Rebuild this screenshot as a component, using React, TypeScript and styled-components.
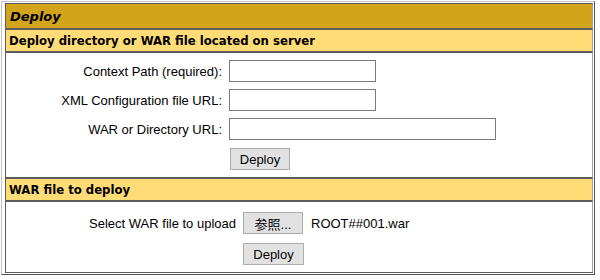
import React from "react";
import styled, { createGlobalStyle } from "styled-components";

const GlobalStyle = createGlobalStyle`
  body {
    margin: 0;
    background: #ffffff;
    font-family: "Liberation Sans", Arial, sans-serif;
  }
`;

const Frame = styled.div`
  margin: 1px 0 0 1px;
  width: 594px;
  box-sizing: border-box;
  border: 1px solid;
  border-color: #c4c4c4 #555555 #555555 #c4c4c4;
  padding: 1px 1px 1px 3px;
`;

const Cell = styled.div`
  border: 1px solid;
  border-color: #5c5c5c #a0a0a0 #5c5c5c #5c5c5c;
  box-sizing: border-box;
`;

const TitleCell = styled(Cell)`
  background: #d2a41c;
  height: 26px;
  display: flex;
  align-items: center;
  padding-left: 4px;
  font-family: "DejaVu Sans", Verdana, sans-serif;
  font-weight: bold;
  font-style: italic;
  font-size: 13px;
  color: #000;
`;

const HeaderCell = styled(Cell)`
  background: #ffdc75;
  height: 23px;
  display: flex;
  align-items: center;
  padding-left: 3px;
  font-family: "DejaVu Sans", Verdana, sans-serif;
  font-weight: bold;
  font-size: 11.7px;
  color: #000;
`;

const Body = styled(Cell)<{ $labelWidth: number; $pt: number; $pb: number; $gap: number }>`
  display: grid;
  grid-template-columns: ${(p) => p.$labelWidth}px 1fr;
  column-gap: 7px;
  row-gap: ${(p) => p.$gap}px;
  align-items: center;
  padding: ${(p) => p.$pt}px 0 ${(p) => p.$pb}px 0;
`;

const Label = styled.label`
  text-align: right;
  font-size: 13px;
  color: #000;
  white-space: nowrap;
`;

const TextInput = styled.input<{ $w: number }>`
  width: ${(p) => p.$w}px;
  height: 22px;
  box-sizing: border-box;
  border: 1px solid #7a7a7a;
  margin: 0;
  padding: 1px 3px;
  font-size: 13px;
`;

const Button = styled.button<{ $w: number }>`
  width: ${(p) => p.$w}px;
  height: 22px;
  box-sizing: border-box;
  margin: 0;
  padding: 0;
  background: #e1e1e1;
  border: 1px solid #adadad;
  font-family: "Liberation Sans", "Noto Sans CJK JP", sans-serif;
  font-size: 13px;
  color: #000;
`;

const ButtonSlot = styled.div<{ $offset: number }>`
  grid-column: 2;
  padding-left: ${(p) => p.$offset}px;
  margin-top: ${(p) => (p.$offset ? 1 : 0)}px;
`;

const FilePicker = styled.div`
  display: flex;
  align-items: center;
  gap: 8px;
`;

const FileName = styled.span`
  font-size: 13px;
  color: #000;
`;

export default function App() {
  return (
    <>
      <GlobalStyle />
      <Frame>
        <TitleCell>Deploy</TitleCell>
        <HeaderCell>Deploy directory or WAR file located on server</HeaderCell>
        <Body $labelWidth={216} $pt={7} $pb={7} $gap={7}>
          <Label>Context Path (required):</Label>
          <TextInput $w={147} />
          <Label>XML Configuration file URL:</Label>
          <TextInput $w={147} />
          <Label>WAR or Directory URL:</Label>
          <TextInput $w={267} />
          <ButtonSlot $offset={1}>
            <Button $w={60}>Deploy</Button>
          </ButtonSlot>
        </Body>
        <HeaderCell>WAR file to deploy</HeaderCell>
        <Body $labelWidth={230} $pt={10} $pb={7} $gap={9}>
          <Label>Select WAR file to upload</Label>
          <FilePicker>
            <Button $w={60}>参照...</Button>
            <FileName>ROOT##001.war</FileName>
          </FilePicker>
          <ButtonSlot $offset={0}>
            <Button $w={61}>Deploy</Button>
          </ButtonSlot>
        </Body>
      </Frame>
    </>
  );
}
